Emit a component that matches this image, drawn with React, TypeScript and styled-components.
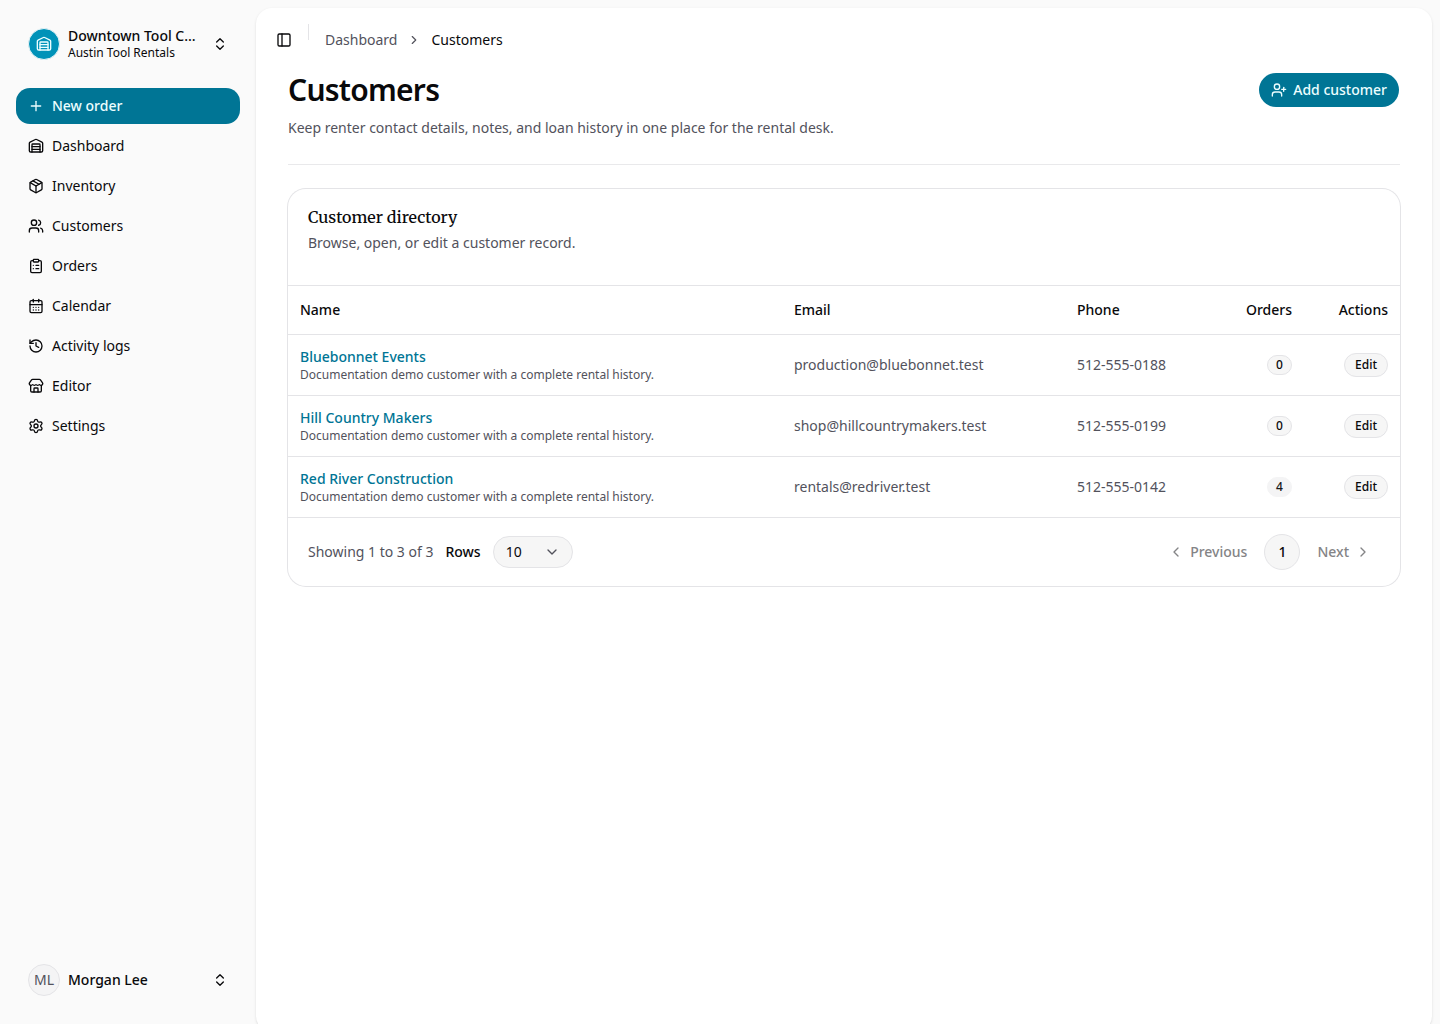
import React from "react";
import styled, { createGlobalStyle, css } from "styled-components";
import {
  CalendarDays,
  ChevronDown,
  ChevronLeft,
  ChevronRight,
  ChevronsUpDown,
  ClipboardList,
  History,
  Package,
  PanelLeft,
  Plus,
  Settings,
  Store,
  UserPlus,
  Users,
  Warehouse,
} from "lucide-react";

const color = {
  foreground: "#09090b",
  muted: "#52525c",
  primary: "#007595",
  primaryText: "#ecfeff",
  border: "#e4e4e7",
  surface: "#f6f6f6",
  sidebar: "#fafafa",
};

const GlobalStyle = createGlobalStyle`
  *, *::before, *::after { box-sizing: border-box; }
  body {
    margin: 0;
    height: 1024px;
    overflow: hidden;
    background: ${color.sidebar};
    color: ${color.foreground};
    font-family: "Noto Sans", sans-serif;
    font-size: 14px;
    line-height: 20px;
  }
  h1, h2, p { margin: 0; }
  a { color: inherit; text-decoration: none; }
  button { font: inherit; color: inherit; border: 0; padding: 0; background: none; }
  svg { flex-shrink: 0; display: block; }
`;

const Shell = styled.div`
  display: flex;
  height: 1024px;
`;

const Sidebar = styled.aside`
  width: 256px;
  flex-shrink: 0;
  padding: 16px;
  display: flex;
  flex-direction: column;
`;

const AccountButton = styled.button`
  display: flex;
  align-items: center;
  gap: 8px;
  height: 56px;
  padding: 0 12px;
  text-align: left;
`;

const BrandMark = styled.span`
  width: 32px;
  height: 32px;
  border-radius: 50%;
  border: 1px solid #e8f4f7;
  display: grid;
  place-items: center;
  background: #0092b8;
  color: ${color.primaryText};
`;

const Initials = styled.span`
  width: 32px;
  height: 32px;
  border-radius: 50%;
  border: 1px solid ${color.border};
  display: grid;
  place-items: center;
  background: #f4f4f5;
  color: ${color.muted};
`;

const AccountText = styled.span`
  flex: 1;
  min-width: 0;
  display: grid;
`;

const AccountName = styled.span`
  font-weight: 500;
  line-height: 17.5px;
  white-space: nowrap;
`;

const AccountOrg = styled.span`
  font-size: 12px;
  line-height: 16px;
`;

const NavList = styled.nav`
  flex: 1;
  margin-top: 16px;
  display: flex;
  flex-direction: column;
  gap: 4px;
`;

const NavItem = styled.a<{ $primary?: boolean }>`
  display: flex;
  align-items: center;
  gap: 8px;
  height: 36px;
  padding: 0 12px;
  border-radius: 14px;
  ${(p) =>
    p.$primary &&
    css`
      background: ${color.primary};
      color: ${color.primaryText};
      font-weight: 500;
    `}
`;

const Main = styled.main`
  flex: 1;
  height: 1024px;
  margin: 8px 8px 0 0;
  border-radius: 16px;
  background: #fff;
  box-shadow: 0 1px 3px rgba(0, 0, 0, 0.1), 0 1px 2px -1px rgba(0, 0, 0, 0.1);
`;

const TopBar = styled.header`
  height: 64px;
  padding: 0 16px;
  display: flex;
  align-items: flex-start;
`;

const PanelToggle = styled.button`
  width: 28px;
  height: 28px;
  margin: 18px 10px 0 -2px;
  display: grid;
  place-items: center;
`;

const TopDivider = styled.span`
  width: 1px;
  height: 16px;
  margin: 16px 16px 0 0;
  background: ${color.border};
`;

const Breadcrumb = styled.nav`
  display: flex;
  align-items: center;
  gap: 10px;
  margin-top: 22px;
  color: ${color.muted};
`;

const CurrentCrumb = styled.span`
  color: ${color.foreground};
`;

const Content = styled.div`
  padding: 0 32px;
`;

const PageHead = styled.section`
  display: flex;
  justify-content: space-between;
  align-items: flex-start;
  height: 93px;
  border-bottom: 1px solid #e9e9eb;
`;

const PageTitle = styled.h1`
  font-size: 30px;
  line-height: 36px;
  font-weight: 600;
  letter-spacing: -0.75px;
`;

const PageLead = styled.p`
  margin-top: 10px;
  color: ${color.muted};
`;

const AddButton = styled.button`
  display: flex;
  align-items: center;
  gap: 6px;
  height: 34px;
  margin: 1px 1px 0 0;
  padding: 0 12px;
  border-radius: 17px;
  background: ${color.primary};
  color: ${color.primaryText};
  font-weight: 500;
`;

const Card = styled.section`
  margin-top: 24px;
  border-radius: 18px;
  box-shadow: 0 0 0 1px ${color.border};
`;

const CardHead = styled.div`
  height: 96px;
  padding: 16px 20px;
`;

const CardTitle = styled.h2`
  font-family: Merriweather, "DejaVu Serif Condensed", "DejaVu Serif", serif;
  font-size: 16px;
  line-height: 24px;
  font-weight: 500;
`;

const CardLead = styled.p`
  margin-top: 4px;
  color: ${color.muted};
`;

const Table = styled.table`
  width: 100%;
  table-layout: fixed;
  border-collapse: separate;
  border-spacing: 0;
  border-top: 1px solid ${color.border};
`;

const HeadCell = styled.th<{ $width: number; $end?: boolean }>`
  width: ${(p) => p.$width}px;
  height: 49px;
  padding: 0 12px;
  border-bottom: 1px solid ${color.border};
  font-weight: 500;
  text-align: ${(p) => (p.$end ? "right" : "left")};
`;

const Cell = styled.td`
  height: 61px;
  padding: 0 12px;
  border-bottom: 1px solid ${color.border};
  color: ${color.muted};
`;

const CustomerLink = styled.a`
  display: block;
  color: ${color.primary};
  font-weight: 500;
`;

const CustomerNote = styled.div`
  font-size: 12px;
  line-height: 16px;
`;

const Pill = styled.span<{ $plain?: boolean }>`
  display: flex;
  align-items: center;
  justify-content: center;
  margin-left: auto;
  width: 25px;
  height: 20px;
  border-radius: 10px;
  border: 1px solid ${(p) => (p.$plain ? "#f4f4f5" : color.border)};
  background: ${(p) => (p.$plain ? "#f4f4f5" : color.surface)};
  color: ${(p) => (p.$plain ? "#18181b" : color.foreground)};
  font-size: 12px;
  line-height: 16px;
  font-weight: 500;
`;

const EditButton = styled.button`
  display: flex;
  align-items: center;
  justify-content: center;
  margin-left: auto;
  width: 44px;
  height: 24px;
  border-radius: 12px;
  border: 1px solid ${color.border};
  background: ${color.surface};
  color: ${color.foreground};
  font-size: 12px;
  line-height: 16px;
  font-weight: 500;
`;

const CardFoot = styled.div`
  display: flex;
  align-items: center;
  justify-content: space-between;
  height: 68px;
  padding: 0 20px;
`;

const FootGroup = styled.div`
  display: flex;
  align-items: center;
  gap: 12px;
  color: ${color.muted};
`;

const RowsLabel = styled.span`
  color: ${color.foreground};
  font-weight: 500;
`;

const RowsSelect = styled.button`
  display: flex;
  align-items: center;
  justify-content: space-between;
  width: 80px;
  height: 32px;
  padding: 0 12px;
  border: 1px solid ${color.border};
  border-radius: 16px;
  background: ${color.surface};
  color: ${color.foreground};

  svg {
    color: ${color.muted};
  }
`;

const Pager = styled.div`
  display: flex;
  align-items: center;
  gap: 4px;
`;

const PagerStep = styled.button<{ $next?: boolean }>`
  display: flex;
  align-items: center;
  gap: 6px;
  height: 36px;
  padding: ${(p) => (p.$next ? "0 9px 0 13px" : "0 13px 0 9px")};
  color: #848486;
  font-weight: 500;
`;

const PageNumber = styled.span`
  width: 36px;
  height: 36px;
  border: 1px solid ${color.border};
  border-radius: 50%;
  display: grid;
  place-items: center;
  background: ${color.surface};
  font-weight: 500;
`;

const navItems = [
  { label: "Dashboard", Icon: Warehouse },
  { label: "Inventory", Icon: Package },
  { label: "Customers", Icon: Users },
  { label: "Orders", Icon: ClipboardList },
  { label: "Calendar", Icon: CalendarDays },
  { label: "Activity logs", Icon: History },
  { label: "Editor", Icon: Store },
  { label: "Settings", Icon: Settings },
];

const note = "Documentation demo customer with a complete rental history.";

const customers = [
  { name: "Bluebonnet Events", email: "production@bluebonnet.test", phone: "512-555-0188", orders: 0 },
  { name: "Hill Country Makers", email: "shop@hillcountrymakers.test", phone: "512-555-0199", orders: 0 },
  { name: "Red River Construction", email: "rentals@redriver.test", phone: "512-555-0142", orders: 4 },
];

export default function App() {
  return (
    <>
      <GlobalStyle />
      <Shell>
        <Sidebar>
          <AccountButton>
            <BrandMark>
              <Warehouse size={16} />
            </BrandMark>
            <AccountText>
              <AccountName>Downtown Tool C…</AccountName>
              <AccountOrg>Austin Tool Rentals</AccountOrg>
            </AccountText>
            <ChevronsUpDown size={16} />
          </AccountButton>
          <NavList>
            <NavItem $primary>
              <Plus size={16} />
              New order
            </NavItem>
            {navItems.map(({ label, Icon }) => (
              <NavItem key={label}>
                <Icon size={16} />
                {label}
              </NavItem>
            ))}
          </NavList>
          <AccountButton>
            <Initials>ML</Initials>
            <AccountText>
              <AccountName>Morgan Lee</AccountName>
            </AccountText>
            <ChevronsUpDown size={16} />
          </AccountButton>
        </Sidebar>
        <Main>
          <TopBar>
            <PanelToggle>
              <PanelLeft size={16} />
            </PanelToggle>
            <TopDivider />
            <Breadcrumb>
              <a>Dashboard</a>
              <ChevronRight size={14} />
              <CurrentCrumb>Customers</CurrentCrumb>
            </Breadcrumb>
          </TopBar>
          <Content>
            <PageHead>
              <div>
                <PageTitle>Customers</PageTitle>
                <PageLead>
                  Keep renter contact details, notes, and loan history in one place for the rental desk.
                </PageLead>
              </div>
              <AddButton>
                <UserPlus size={16} />
                Add customer
              </AddButton>
            </PageHead>
            <Card>
              <CardHead>
                <CardTitle>Customer directory</CardTitle>
                <CardLead>Browse, open, or edit a customer record.</CardLead>
              </CardHead>
              <Table>
                <thead>
                  <tr>
                    <HeadCell $width={494}>Name</HeadCell>
                    <HeadCell $width={283}>Email</HeadCell>
                    <HeadCell $width={143}>Phone</HeadCell>
                    <HeadCell $width={96} $end>Orders</HeadCell>
                    <HeadCell $width={96} $end>Actions</HeadCell>
                  </tr>
                </thead>
                <tbody>
                  {customers.map((c) => (
                    <tr key={c.name}>
                      <Cell>
                        <CustomerLink>{c.name}</CustomerLink>
                        <CustomerNote>{note}</CustomerNote>
                      </Cell>
                      <Cell>{c.email}</Cell>
                      <Cell>{c.phone}</Cell>
                      <Cell>
                        <Pill $plain={c.orders > 0}>{c.orders}</Pill>
                      </Cell>
                      <Cell>
                        <EditButton>Edit</EditButton>
                      </Cell>
                    </tr>
                  ))}
                </tbody>
              </Table>
              <CardFoot>
                <FootGroup>
                  <span>Showing 1 to 3 of 3</span>
                  <RowsLabel>Rows</RowsLabel>
                  <RowsSelect>
                    10
                    <ChevronDown size={16} />
                  </RowsSelect>
                </FootGroup>
                <Pager>
                  <PagerStep>
                    <ChevronLeft size={16} />
                    Previous
                  </PagerStep>
                  <PageNumber>1</PageNumber>
                  <PagerStep $next>
                    Next
                    <ChevronRight size={16} />
                  </PagerStep>
                </Pager>
              </CardFoot>
            </Card>
          </Content>
        </Main>
      </Shell>
    </>
  );
}
